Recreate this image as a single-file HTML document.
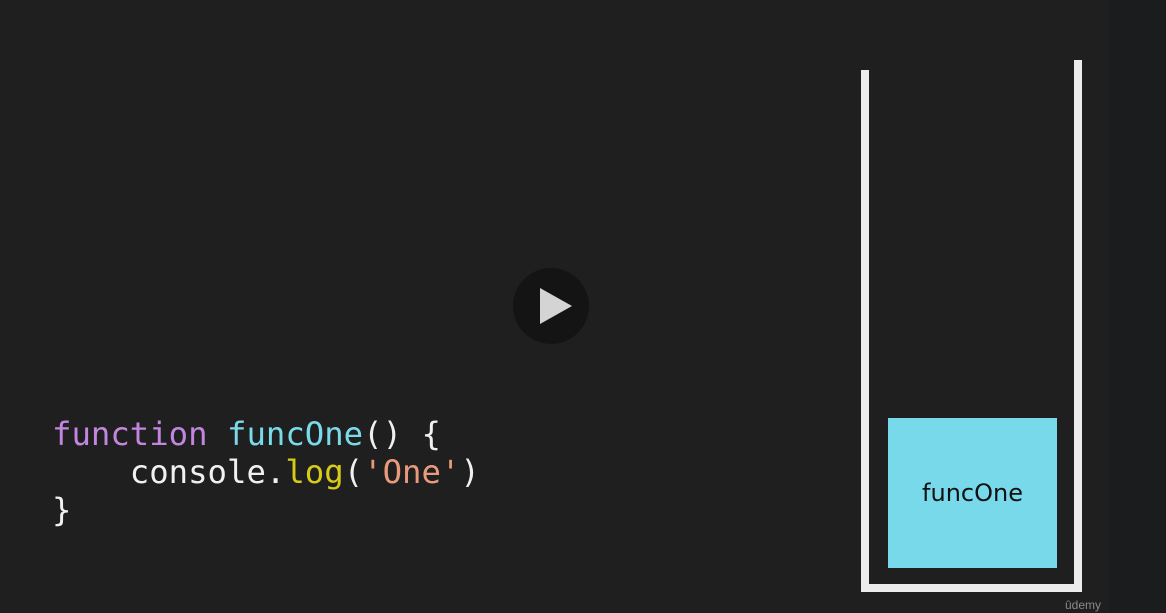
<!DOCTYPE html>
<html><head><meta charset="utf-8"><style>
html,body{margin:0;padding:0}
body{width:1166px;height:613px;background:#1f1f1f;position:relative;overflow:hidden;font-family:"Liberation Sans",sans-serif}
.strip{position:absolute;left:1109px;top:0;width:57px;height:613px;background:#1b1c1d}
.code{position:absolute;left:52px;top:415px;font-family:"DejaVu Sans Mono","Liberation Mono",monospace;font-size:32.3px;line-height:38px;color:#f0f0f0;white-space:pre}
.k{color:#c386e0}.f{color:#79dbea}.l{color:#d7cb1a}.s{color:#e99a7d}
.w{position:absolute;background:#ececec}
.box{position:absolute;left:888px;top:418px;width:169px;height:150px;background:#77d9ea;display:flex;align-items:center;justify-content:center;font-size:24px;color:#111;font-family:"DejaVu Sans","Liberation Sans",sans-serif}
.play{position:absolute;left:513px;top:268px;width:76px;height:76px;border-radius:50%;background:#141414}
.ud{position:absolute;left:1065px;top:598px;font-size:12px;color:#8a8a8a}
</style></head><body>
<div class="strip"></div>
<div class="code"><span class="k">function</span> <span class="f">funcOne</span>() {
    console.<span class="l">log</span>(<span class="s">'One'</span>)
}</div>
<div class="w" style="left:861px;top:70px;width:8px;height:522px"></div>
<div class="w" style="left:1074px;top:60px;width:8px;height:532px"></div>
<div class="w" style="left:861px;top:584px;width:221px;height:8px"></div>
<div class="box">funcOne</div>
<div class="play"><svg width="76" height="76" viewBox="0 0 76 76"><path d="M27 20 L59 38 L27 56 Z" fill="#d4d4d4"/></svg></div>
<div class="ud">ûdemy</div>
</body></html>
